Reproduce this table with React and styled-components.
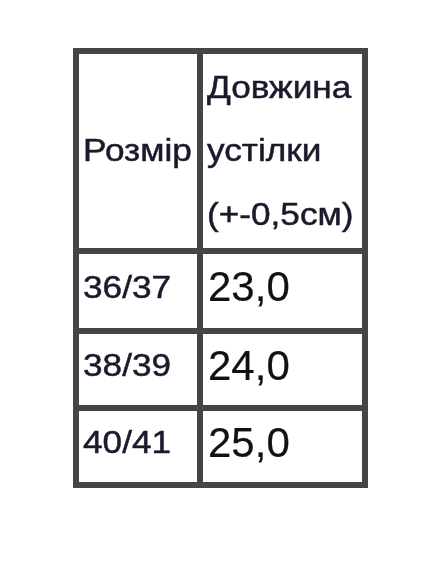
import React from "react";
import styled, { createGlobalStyle } from "styled-components";

const GlobalStyle = createGlobalStyle`
  html, body {
    margin: 0;
    padding: 0;
    background: #ffffff;
  }
  body {
    font-family: "Liberation Sans", Arial, sans-serif;
  }
`;

const Page = styled.div`
  width: 428px;
  height: 570px;
  padding: 48px 0 0 73px;
  box-sizing: border-box;
  background: #ffffff;
`;

const SizeTable = styled.div`
  display: grid;
  grid-template-columns: 118px 159px;
  grid-template-rows: 194px 74px 71px 71px;
  gap: 6px;
  padding: 6px;
  width: 295px;
  box-sizing: border-box;
  background: #454545;
  filter: blur(0.5px);
`;

const Cell = styled.div`
  background: #ffffff;
  display: flex;
  align-items: center;
  padding: 0 0 ${(p) => (p.$header ? 0 : 8)}px ${(p) => (p.$value ? 5 : 4)}px;
  box-sizing: border-box;
  font-family: "Liberation Sans", Arial, sans-serif;
  font-size: ${(p) => (p.$value ? 42 : 32)}px;
  line-height: ${(p) => (p.$header ? "63.5px" : "normal")};
  color: ${(p) => (p.$value ? "#111111" : "#1a1a2c")};
  white-space: nowrap;
`;

const Text = styled.span`
  display: block;
  transform: scaleX(${(p) => (p.$wide ? 1.1 : 1)});
  transform-origin: left center;
  -webkit-text-stroke: ${(p) => (p.$wide ? "0.5px" : "0.2px")} currentColor;
`;

const HeaderLines = styled.div`
  display: flex;
  flex-direction: column;
`;

const rows = [
  ["36/37", "23,0"],
  ["38/39", "24,0"],
  ["40/41", "25,0"],
];

export default function App() {
  return (
    <>
      <GlobalStyle />
      <Page>
        <SizeTable>
          <Cell $header>
            <Text $wide>Розмір</Text>
          </Cell>
          <Cell $header>
            <HeaderLines>
              <Text $wide>Довжина</Text>
              <Text $wide>устілки</Text>
              <Text $wide>(+-0,5см)</Text>
            </HeaderLines>
          </Cell>
          {rows.map(([size, length]) => (
            <React.Fragment key={size}>
              <Cell>
                <Text $wide>{size}</Text>
              </Cell>
              <Cell $value>
                <Text>{length}</Text>
              </Cell>
            </React.Fragment>
          ))}
        </SizeTable>
      </Page>
    </>
  );
}
